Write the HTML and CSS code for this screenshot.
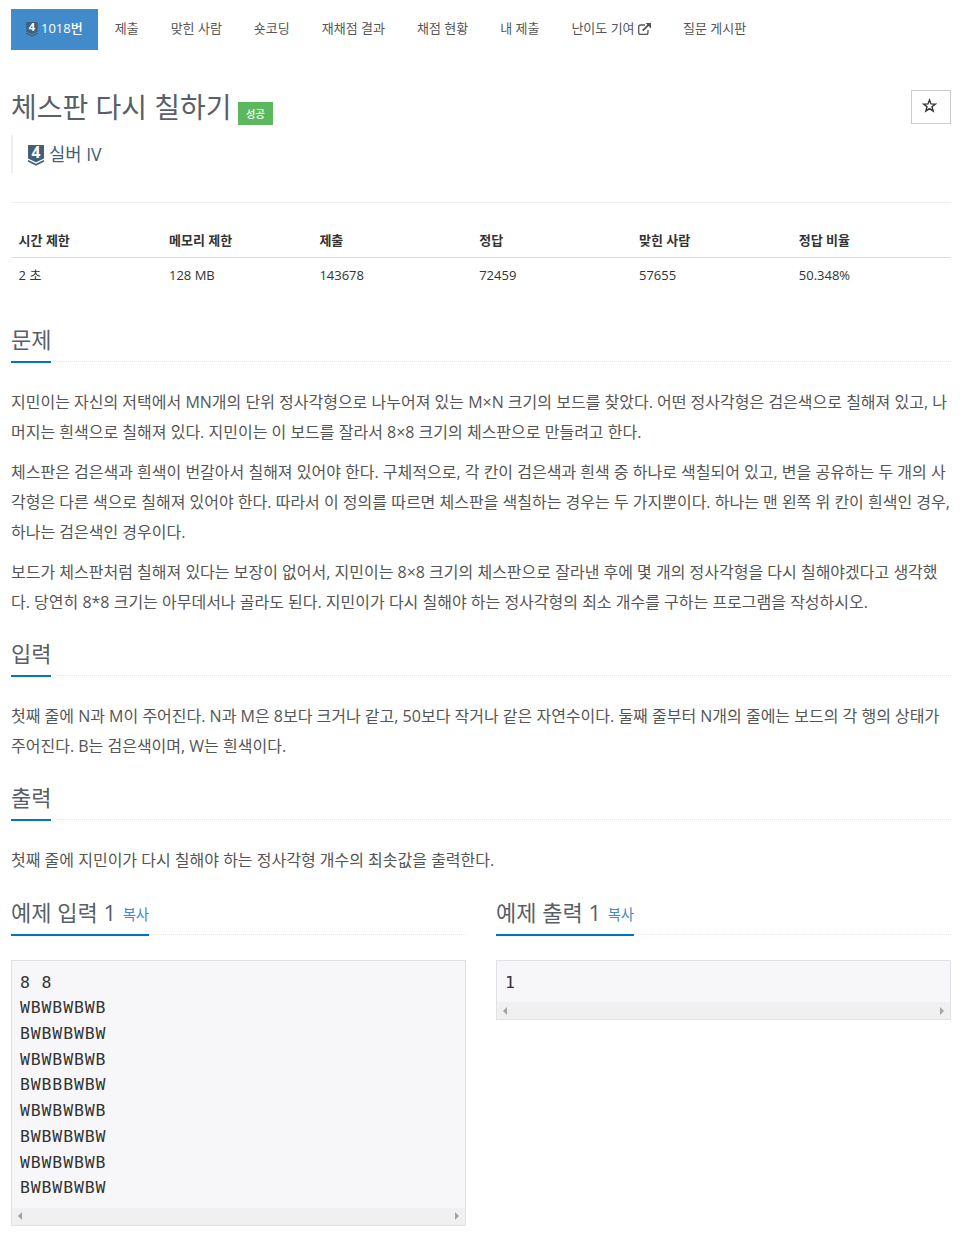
FILE: index.html
```html
<!DOCTYPE html>
<html lang="ko">
<head>
    <meta charset="UTF-8">
    <title>1018번: 체스판 다시 칠하기</title>
    <link rel="stylesheet" href="styles.css">
</head>
<body>
<div class="container">
    <ul class="problem-menu">
        <li class="active"><a><svg class="tier tier-sm" viewBox="0 0 16 21"><path fill="#435f7a" d="M0 0h16v13.6l-8 3.6-8-3.6z"/><path fill="none" stroke="#435f7a" stroke-width="1.8" d="M0 15.8l8 4 8-4"/><text x="8" y="13">4</text></svg>1018번</a></li>
        <li><a>제출</a></li>
        <li><a>맞힌 사람</a></li>
        <li><a>숏코딩</a></li>
        <li><a>재채점 결과</a></li>
        <li><a>채점 현황</a></li>
        <li><a>내 제출</a></li>
        <li><a>난이도 기여 <svg class="external" viewBox="0 0 13 12"><path fill="none" stroke="#555" stroke-width="1.3" d="M7 2H2.6Q.7 2 .7 3.9v5.5q0 1.9 1.9 1.9h5.5q1.9 0 1.9-1.9V7"/><path fill="none" stroke="#555" stroke-width="1.9" d="M4.7 7.6L10.5 1.8"/><path fill="#555" d="M7.6 0H13v5.4z"/></svg></a></li>
        <li><a>질문 게시판</a></li>
    </ul>

    <div class="title-row">
        <div class="title">
            <h1>체스판 다시 칠하기</h1>
            <span class="label">성공</span>
        </div>
        <button class="btn-star">
            <svg viewBox="0 0 14 14"><path fill="none" stroke="#333" stroke-width="1.3" d="M7 1.8l1.4 3.7 4.1.2-3.2 2.5 1.1 4L7 9.9l-3.4 2.3 1.1-4-3.2-2.5 4.1-.2z"/></svg>
        </button>
    </div>
    <blockquote>
        <svg class="tier" viewBox="0 0 16 21"><path fill="#435f7a" d="M0 0h16v13.6l-8 3.6-8-3.6z"/><path fill="none" stroke="#435f7a" stroke-width="1.8" d="M0 15.8l8 4 8-4"/><text x="8" y="13">4</text></svg>
        <span>실버 IV</span>
    </blockquote>
    <hr>

    <table class="problem-info">
        <thead>
        <tr>
            <th class="w16">시간 제한</th>
            <th class="w16">메모리 제한</th>
            <th>제출</th>
            <th>정답</th>
            <th>맞힌 사람</th>
            <th>정답 비율</th>
        </tr>
        </thead>
        <tbody>
        <tr>
            <td>2 초</td>
            <td>128 MB</td>
            <td>143678</td>
            <td>72459</td>
            <td>57655</td>
            <td>50.348%</td>
        </tr>
        </tbody>
    </table>

    <section>
        <div class="headline"><h2>문제</h2></div>
        <p>지민이는 자신의 저택에서 MN개의 단위 정사각형으로 나누어져 있는 M×N 크기의 보드를 찾았다. 어떤 정사각형은 검은색으로 칠해져 있고, 나머지는 흰색으로 칠해져 있다. 지민이는 이 보드를 잘라서 8×8 크기의 체스판으로 만들려고 한다.</p>
        <p>체스판은 검은색과 흰색이 번갈아서 칠해져 있어야 한다. 구체적으로, 각 칸이 검은색과 흰색 중 하나로 색칠되어 있고, 변을 공유하는 두 개의 사각형은 다른 색으로 칠해져 있어야 한다. 따라서 이 정의를 따르면 체스판을 색칠하는 경우는 두 가지뿐이다. 하나는 맨 왼쪽 위 칸이 흰색인 경우, 하나는 검은색인 경우이다.</p>
        <p>보드가 체스판처럼 칠해져 있다는 보장이 없어서, 지민이는 8×8 크기의 체스판으로 잘라낸 후에 몇 개의 정사각형을 다시 칠해야겠다고 생각했다. 당연히 8*8 크기는 아무데서나 골라도 된다. 지민이가 다시 칠해야 하는 정사각형의 최소 개수를 구하는 프로그램을 작성하시오.</p>
    </section>

    <section>
        <div class="headline"><h2>입력</h2></div>
        <p>첫째 줄에 N과 M이 주어진다. N과 M은 8보다 크거나 같고, 50보다 작거나 같은 자연수이다. 둘째 줄부터 N개의 줄에는 보드의 각 행의 상태가 주어진다. B는 검은색이며, W는 흰색이다.</p>
    </section>

    <section>
        <div class="headline"><h2>출력</h2></div>
        <p>첫째 줄에 지민이가 다시 칠해야 하는 정사각형 개수의 최솟값을 출력한다.</p>
    </section>

    <div class="samples">
        <section>
            <div class="headline"><h2>예제 입력 1 <a class="copy">복사</a></h2></div>
            <div class="sample">
<pre>8 8
WBWBWBWB
BWBWBWBW
WBWBWBWB
BWBBBWBW
WBWBWBWB
BWBWBWBW
WBWBWBWB
BWBWBWBW</pre>
                <div class="scrollbar"><i class="left"></i><i class="right"></i></div>
            </div>
        </section>
        <section>
            <div class="headline"><h2>예제 출력 1 <a class="copy">복사</a></h2></div>
            <div class="sample">
                <pre>1</pre>
                <div class="scrollbar"><i class="left"></i><i class="right"></i></div>
            </div>
        </section>
    </div>
</div>
</body>
</html>
```
FILE: styles.css
```css
* {
    box-sizing: border-box;
}

body {
    margin: 0;
    background: #fff;
    color: #333;
    font-family: "Open Sans", "Noto Sans CJK KR", sans-serif;
    font-size: 13px;
    line-height: 1.6;
}

h1, h2, p, pre, ul, blockquote {
    margin: 0;
    padding: 0;
    font-weight: 400;
}

.container {
    width: 940px;
    margin-left: 11px;
    padding-top: 9px;
}

/* menu */
.problem-menu {
    display: flex;
    gap: 2px;
    height: 41px;
    list-style: none;
}

.problem-menu a {
    display: flex;
    align-items: center;
    height: 41px;
    padding: 0 15px 2px;
    color: #555;
    white-space: pre;
}

.problem-menu .active a {
    background: #428bca;
    color: #fff;
    font-weight: 500;
}

.tier {
    width: 16px;
    height: 21px;
    overflow: visible;
}

.tier text {
    fill: #fff;
    font: 700 15.5px/1 "Open Sans", sans-serif;
    text-anchor: middle;
}

.tier-sm {
    width: 12px;
    height: 15px;
    margin: 2px 3px 0 0;
}

.external {
    width: 13px;
    height: 12px;
}

/* title */
.title-row {
    display: flex;
    justify-content: space-between;
    height: 45px;
    margin-top: 40px;
}

.title {
    display: flex;
    align-items: flex-start;
    gap: 6px;
}

h1 {
    color: #585f69;
    font-size: 28px;
    line-height: 34px;
}

.label {
    height: 23px;
    margin-top: 12px;
    padding: 0 8px;
    background: #5cb85c;
    color: #fff;
    font-size: 10.5px;
    font-weight: 500;
    line-height: 24px;
}

.btn-star {
    display: flex;
    align-items: center;
    justify-content: center;
    width: 40px;
    height: 34px;
    padding: 0;
    border: 1px solid #ccc;
    background: #fff;
}

.btn-star svg {
    width: 15px;
    height: 15px;
    margin: 0 3px 3px 0;
}

blockquote {
    display: flex;
    align-items: center;
    gap: 5px;
    height: 38px;
    padding-left: 15px;
    border-left: 2px solid #eee;
    color: #435f7a;
    font-size: 17.7px;
}

blockquote .tier {
    margin-top: 2px;
}

hr {
    margin: 29px 0 20px;
    border: 0;
    border-top: 1px solid #eee;
}

/* limits and statistics */
.problem-info {
    width: 100%;
    border-collapse: collapse;
    table-layout: fixed;
}

.problem-info th,
.problem-info td {
    height: 35px;
    padding: 1px 8px 0 7.6px;
    text-align: left;
}

.problem-info th {
    height: 34px;
    border-bottom: 1px solid #ddd;
}

.w16 {
    width: 16%;
}

.problem-info + section {
    margin-top: 21px;
}

/* sections */
.headline {
    display: flex;
    height: 39px;
    margin: 10px 0 25px;
    border-bottom: 1px dotted #e4e9f0;
}

h2 {
    height: 40px;
    border-bottom: 2px solid #0076c0;
    color: #585f69;
    font-size: 22px;
    line-height: 33px;
}

p {
    margin-bottom: 10px;
    color: #555;
    font-size: 16px;
    line-height: 30px;
    word-break: break-all;
}

section {
    display: flow-root;
}

/* samples */
.samples {
    display: grid;
    grid-template-columns: 1fr 1fr;
    gap: 30px;
    align-items: start;
    padding-top: 1px;
}

.copy {
    margin-left: 1px;
    color: #428bca;
    font-size: 14.3px;
    line-height: 1;
    vertical-align: 1px;
}

.sample {
    border: 1px solid #e1e1e8;
    background: #f7f7f9;
}

pre {
    padding: 8.6px 8px 7px;
    color: #333;
    font-family: "DejaVu Sans Mono", monospace;
    font-size: 16.5px;
    letter-spacing: 0.85px;
    line-height: 25.7px;
}

.scrollbar {
    display: flex;
    align-items: center;
    justify-content: space-between;
    height: 17px;
    padding: 0 6px;
    background: #f0f0f0;
}

.scrollbar i {
    border: 4px solid transparent;
}

.scrollbar .left {
    border-left: 0;
    border-right-color: #a3a3a3;
}

.scrollbar .right {
    border-right: 0;
    border-left-color: #a3a3a3;
}
```
